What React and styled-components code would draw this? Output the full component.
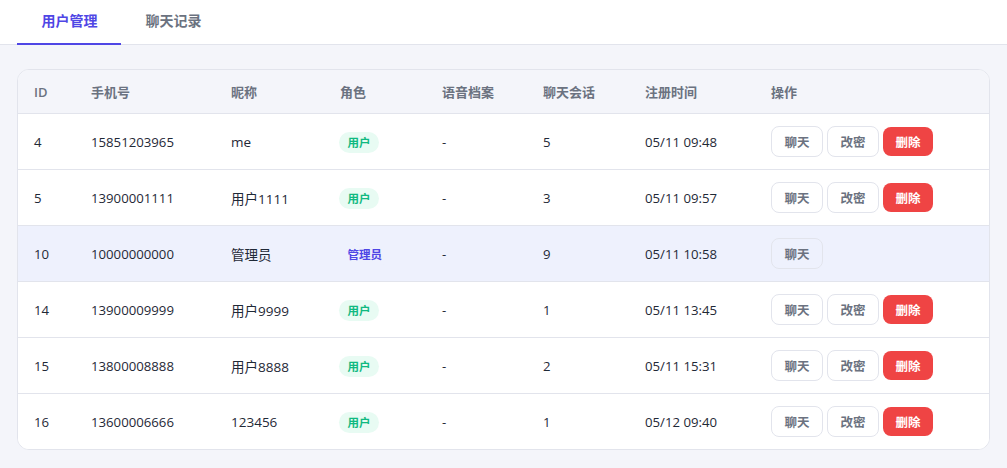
import React from "react";
import styled, { createGlobalStyle } from "styled-components";

const Global = createGlobalStyle`
  html, body { margin: 0; padding: 0; background: #f4f5fa; }
  body { font-family: "Open Sans", "Noto Sans CJK SC", sans-serif; color: #1f2937; overflow: hidden; }
  * { box-sizing: border-box; }
`;
const Page = styled.div`width: 1007px; height: 468px; display: flex; flex-direction: column;`;
const TabBar = styled.div`height: 45px; background: #fff; border-bottom: 1px solid #e2e4ec; display: flex; padding: 0 17px;`;
const Tab = styled.div`
  width: 104px; height: 45px; padding: 0 0 3px 1px; display: flex; align-items: center; justify-content: center;
  font-size: 14px; font-weight: 600; color: ${p => p.$active ? "#4f46e5" : "#6b7280"};
  border-bottom: 2px solid ${p => p.$active ? "#4f46e5" : "transparent"};
`;
const Content = styled.div`padding: 24px 17px 0;`;
const Card = styled.div`background: #fff; border: 1px solid #e2e4ec; border-radius: 12px; overflow: hidden;`;
const Table = styled.table`width: 972px; border-collapse: collapse; table-layout: fixed;`;
const Th = styled.th`
  height: 43px; padding: 1px 0 0 16px; background: #f4f5fa; text-align: left; font-size: 13px; font-weight: 600; color: #6b7280;
  border-bottom: 1px solid #e2e4ec;
`;
const Tr = styled.tr`background: ${p => p.$admin ? "#eef1fd" : "#fff"};`;
const Td = styled.td`
  height: 56px; padding: ${p => p.$flush ? "0" : "2px"} 0 0 16px; font-size: ${p => p.$nick ? "13.5px" : "13.2px"}; color: #1f2937;
  border-bottom: ${p => p.$last ? "none" : "1px solid #e2e4ec"};
`;
const Badge = styled.span`
  display: inline-block; margin-left: -1px; padding: 2px 8.5px; border-radius: 10.5px; font-size: 11.5px; font-weight: 600; line-height: 17px;
  color: ${p => p.$admin ? "#4f46e5" : "#10b981"}; background: ${p => p.$admin ? "#eef1fd" : "#e8fbf3"};
`;
const Actions = styled.div`display: flex; gap: 4px; align-items: center;`;
const Btn = styled.button`
  width: 52px; height: 31px; border-radius: 8px; font: 600 12.5px "Open Sans", "Noto Sans CJK SC", sans-serif; padding: 0;
  border: 1px solid #e2e4ec;
  background: transparent;
  color: #6b7280;
`;
const DangerBtn = styled(Btn)`
  width: 50px; height: 29px; border: 0; background: #ef4444; color: #fff;
`;

const cols = [57, 140, 109, 102, 101, 102, 126, 235];
const heads = ["ID", "手机号", "昵称", "角色", "语音档案", "聊天会话", "注册时间", "操作"];
const rows = [
  [4, "15851203965", "me", 5, "05/11 09:48"],
  [5, "13900001111", "用户1111", 3, "05/11 09:57"],
  [10, "10000000000", "管理员", 9, "05/11 10:58", true],
  [14, "13900009999", "用户9999", 1, "05/11 13:45"],
  [15, "13800008888", "用户8888", 2, "05/11 15:31"],
  [16, "13600006666", "123456", 1, "05/12 09:40"],
];

export default function App() {
  return (
    <Page>
      <Global />
      <TabBar>
        <Tab $active>用户管理</Tab>
        <Tab>聊天记录</Tab>
      </TabBar>
      <Content>
        <Card>
          <Table>
            <colgroup>{cols.map((w, i) => <col key={i} style={{ width: w }} />)}</colgroup>
            <thead><tr>{heads.map(h => <Th key={h}>{h}</Th>)}</tr></thead>
            <tbody>
              {rows.map((r, i) => {
                const last = i === rows.length - 1;
                return (
                  <Tr key={r[0]} $admin={r[5]}>
                    <Td $last={last}>{r[0]}</Td>
                    <Td $last={last}>{r[1]}</Td>
                    <Td $last={last} $nick>{r[2]}</Td>
                    <Td $last={last}><Badge $admin={r[5]}>{r[5] ? "管理员" : "用户"}</Badge></Td>
                    <Td $last={last}>-</Td>
                    <Td $last={last}>{r[3]}</Td>
                    <Td $last={last}>{r[4]}</Td>
                    <Td $last={last} $flush>
                      <Actions>
                        <Btn>聊天</Btn>
                        {!r[5] && <Btn>改密</Btn>}
                        {!r[5] && <DangerBtn>删除</DangerBtn>}
                      </Actions>
                    </Td>
                  </Tr>
                );
              })}
            </tbody>
          </Table>
        </Card>
      </Content>
    </Page>
  );
}
